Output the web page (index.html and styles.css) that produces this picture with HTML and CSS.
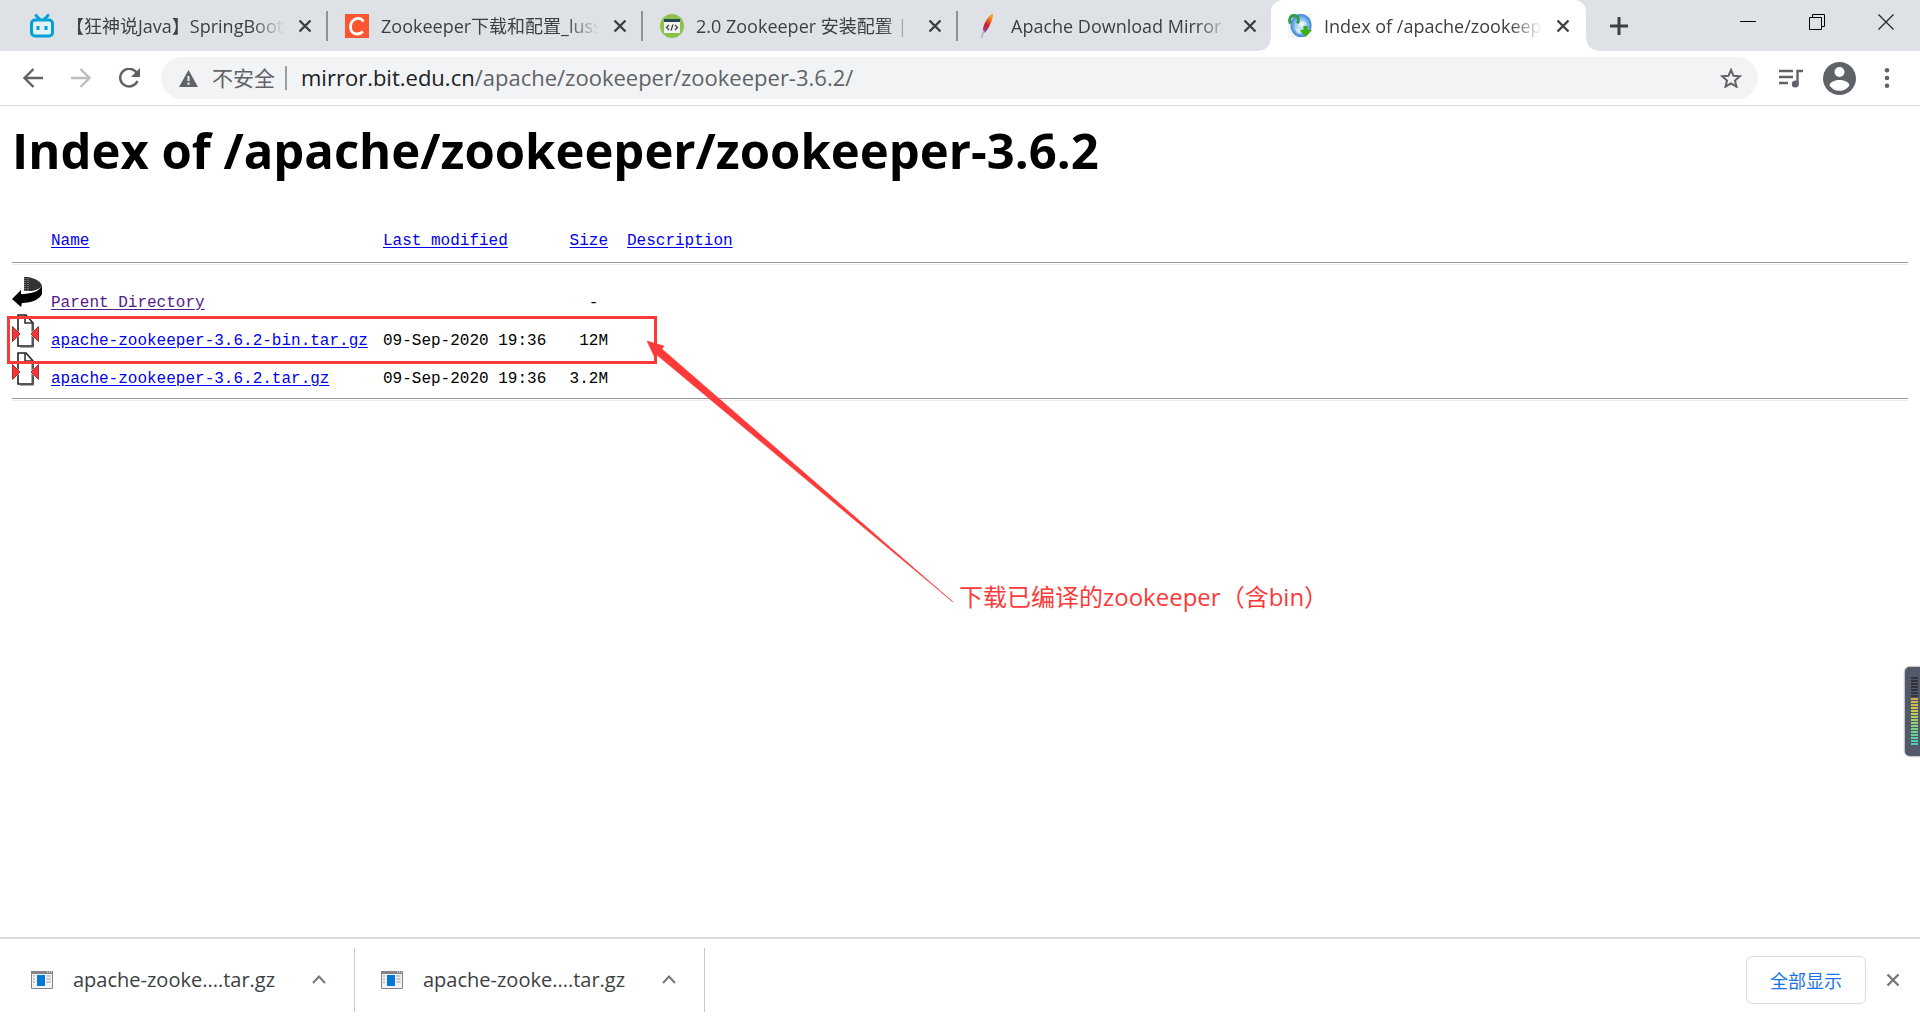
FILE: index.html
```html
<!DOCTYPE html>
<html lang="zh-CN">
<head>
<meta charset="utf-8">
<title>Index of /apache/zookeeper/zookeeper-3.6.2</title>
<link rel="stylesheet" href="styles.css">
</head>
<body>
<svg class="defs" width="0" height="0" aria-hidden="true">
  <symbol id="x" viewBox="0 0 14 14"><path d="M1.500 1.500l11 11M12.500 1.500l-11 11" fill="none" stroke="currentColor" stroke-width="2.400"/></symbol>
  <symbol id="archive" viewBox="0 0 27 34">
    <path d="M6 1h8l7 8v23H6z" fill="#fff" stroke="#222" stroke-width="1.600"/>
    <path d="M20.500 9v23.500H8" fill="none" stroke="#555" stroke-width="2"/>
    <path d="M13 1v8h8" fill="none" stroke="#333" stroke-width="1.600"/>
    <path d="M0 12l9.500 8L0 28zM27 12l-9.500 8 9.500 8z" fill="#fff"/>
    <path d="M.500 12.500L8 20 .500 27.500zM26.500 12.500L19 20l7.500 7.500z" fill="#f33" stroke="#933" stroke-width="1"/>
  </symbol>
  <symbol id="file" viewBox="0 0 22 18">
    <path d="M.5.5h21v17H.5z" fill="#f2f2f2" stroke="#82868a"/>
    <path d="M0 0h22v3H0z" fill="#82868a"/>
    <path d="M6 4h8v11H6z" fill="#0078d7"/>
    <path d="M2 5h2M2 8h2M2 11h2M15.500 5h4M15.500 8h4M15.500 11h4" stroke="#999"/>
    <path d="M16 1h1M18 1h1M20 1h1" stroke="#fff"/>
  </symbol>
</svg>

<header class="browser">
  <div class="tabs">
    <div class="tab">
      <svg class="fav" viewBox="0 0 24 24"><path d="M6 1.500l4 4M18 1.500l-4 4" stroke="#00a1d6" stroke-width="3" stroke-linecap="round"/><rect x="1.500" y="6" width="21" height="16" rx="3.500" fill="#e3f1f7" stroke="#00a1d6" stroke-width="3"/><path d="M8 12v4M16 12v4" stroke="#00a1d6" stroke-width="3"/></svg>
      <span class="title">【狂神说Java】SpringBoot</span>
      <button class="close" aria-label="关闭"><svg><use href="#x"/></svg></button>
    </div>
    <div class="tab">
      <svg class="fav" viewBox="0 0 24 24"><path fill="#fc5531" d="M0 0h24v24H0z"/><path d="M18.500 7.500C17 5 14.500 4 12 4.500 8 5.200 5.500 9 5.500 13s2.500 7 6.500 7c2.500 0 4.500-1 6-2.500" fill="none" stroke="#fff" stroke-width="2.800"/></svg>
      <span class="title">Zookeeper下载和配置_luss</span>
      <button class="close" aria-label="关闭"><svg><use href="#x"/></svg></button>
    </div>
    <div class="tab">
      <svg class="fav" viewBox="0 0 24 24"><circle cx="12" cy="12" r="12" fill="#8bc34a"/><path fill="#f1f1f1" d="M4 5h16v14H4z"/><path fill="#264653" d="M4 5h16v3H4z"/><path d="M9 11l-2.500 2.500L9 16M15 11l2.500 2.500L15 16M13 10.500l-2 6" fill="none" stroke="#444" stroke-width="1.300"/></svg>
      <span class="title">2.0 Zookeeper 安装配置 | 菜</span>
      <button class="close" aria-label="关闭"><svg><use href="#x"/></svg></button>
    </div>
    <div class="tab">
      <svg class="fav" viewBox="0 0 24 24"><defs><linearGradient id="feather" x1="0" y1="1" x2=".4" y2="0"><stop offset=".1" stop-color="#8e3a96"/><stop offset=".5" stop-color="#d22128"/><stop offset="1" stop-color="#f79a23"/></linearGradient></defs><path d="M18 0c-3 0-7 6-9 11-1 3-1.500 5-1 7l2 .5c4-4 8-13 8-18.500z" fill="url(#feather)"/><path d="M9 16l-2.500 8" stroke="#b9a5c9" stroke-width="1.400"/></svg>
      <span class="title">Apache Download Mirror</span>
      <button class="close" aria-label="关闭"><svg><use href="#x"/></svg></button>
    </div>
    <div class="tab active">
      <svg class="fav" viewBox="0 0 24 24"><defs><radialGradient id="globe"><stop offset="0" stop-color="#e8f6ff"/><stop offset=".6" stop-color="#8cc4f2"/><stop offset="1" stop-color="#3b80d4"/></radialGradient></defs><path d="M0 0h24v24H0z" fill="#f5f5f5"/><ellipse cx="13" cy="11.500" rx="10.500" ry="11.500" fill="url(#globe)"/><path d="M9 8l3 1 2-2 4 2-2 3-5-1zM7 14l5 1 1 5-4-1z" fill="#fff" opacity=".6"/><path d="M2.500 9.500c-2-4 0-8 3.500-8s5.500 3 3.500 8" fill="none" stroke="#2e9c4b" stroke-width="3"/><path d="M15.500 12h4v4H24l-6.500 7L12 16h3.500z" fill="#3cae0d"/></svg>
      <span class="title">Index of /apache/zookeep</span>
      <button class="close" aria-label="关闭"><svg><use href="#x"/></svg></button>
    </div>
    <button class="new" aria-label="新标签页"><svg width="18" height="18" viewBox="0 0 18 18"><path d="M9 0v18M0 9h18" stroke="#3c4043" stroke-width="3"/></svg></button>
    <div class="window">
      <button aria-label="最小化"><svg width="16" height="16" viewBox="0 0 16 16"><path d="M0 7.500h16" stroke="#000"/></svg></button>
      <button aria-label="还原"><svg width="16" height="16" viewBox="0 0 16 16"><path d="M.5 3.500h12v12H.5zM3.500 3.500v-3h12v12h-3" fill="none" stroke="#000"/></svg></button>
      <button aria-label="关闭窗口"><svg width="16" height="16" viewBox="0 0 16 16"><path d="M.5.5l15 15M15.500.5l-15 15" stroke="#222" stroke-width="1.200"/></svg></button>
    </div>
  </div>
  <div class="toolbar">
    <button aria-label="后退"><svg width="20" height="20" viewBox="0 0 20 20"><path d="M20 10H2M10.500 1L1.500 10l9 9" fill="none" stroke="#5f6368" stroke-width="2.400"/></svg></button>
    <button aria-label="前进"><svg width="20" height="20" viewBox="0 0 20 20"><path d="M0 10h18M9.500 1l9 9-9 9" fill="none" stroke="#bcbec0" stroke-width="2.400"/></svg></button>
    <button aria-label="重新加载"><svg width="22" height="20" viewBox="0 0 22 20"><path d="M18.500 13A9 8.800 0 1 1 17.500 4.500" fill="none" stroke="#5f6368" stroke-width="2.500"/><path d="M21 0v9h-9z" fill="#5f6368"/></svg></button>
    <div class="omnibox">
      <svg width="19" height="17" viewBox="0 0 19 17"><path d="M9.500 0L19 17H0z" fill="#5f6368"/><path d="M9.500 6v5M9.500 12.500v2.200" stroke="#f1f3f4" stroke-width="2"/></svg>
      <span class="warn">不安全</span>
      <div class="url"><b>mirror.bit.edu.cn</b>/apache/zookeeper/zookeeper-3.6.2/</div>
      <button aria-label="收藏"><svg width="22" height="20" viewBox="0 0 22 20"><path d="M11 2l2.500 5.800 6.300.5-4.800 4.200 1.500 6.200-5.500-3.300-5.500 3.300L7 12.500 2.200 8.300l6.300-.5z" fill="none" stroke="#5f6368" stroke-width="2"/></svg></button>
    </div>
    <button aria-label="媒体控制"><svg width="24" height="19" viewBox="0 0 24 19"><path d="M0 2h14M0 8h14M0 14h9" stroke="#5f6368" stroke-width="2.400"/><path d="M18.500 15V2H24" fill="none" stroke="#5f6368" stroke-width="2.400"/><circle cx="16.300" cy="15" r="3.500" fill="#5f6368"/></svg></button>
    <button class="profile" aria-label="个人资料"><svg width="33" height="33" viewBox="0 0 33 33"><circle cx="16.500" cy="16.500" r="16.500" fill="#5f6368"/><circle cx="16.500" cy="10" r="5" fill="#fff"/><path d="M6.500 23c1-3.500 6-5 10-5s9 1.500 10 5c-2 4-6 5.800-10 5.800S8.500 27 6.500 23z" fill="#fff"/></svg></button>
    <button aria-label="菜单"><svg width="6" height="20" viewBox="0 0 6 20"><g fill="#5f6368"><circle cx="3" cy="2.300" r="2.300"/><circle cx="3" cy="10" r="2.300"/><circle cx="3" cy="17.700" r="2.300"/></g></svg></button>
  </div>
</header>

<main class="page">
  <h1>Index of /apache/zookeeper/zookeeper-3.6.2</h1>
  <table class="listing">
    <colgroup><col class="c-icon"><col class="c-name"><col class="c-date"><col class="c-size"><col></colgroup>
    <thead>
      <tr><th></th><th><a href="#name">Name</a></th><th><a href="#date">Last modified</a></th><th class="size"><a href="#size">Size</a></th><th class="desc"><a href="#desc">Description</a></th></tr>
    </thead>
    <tbody>
      <tr>
        <td class="icon"><svg width="30" height="30" viewBox="0 0 30 30"><path d="M12 0h4c6 1 13 4 14 9-2 3-6 4-10 5h-8z" fill="#333"/><path d="M13 1v13M16 1v13" stroke="#aaa" stroke-dasharray="1 1"/><path d="M30 9v8c-2 5-10 9-20 9l-1 4L0 22l9-9v4c9 0 18-2 21-8z" fill="#000"/></svg></td>
        <td><a class="visited" href="#parent">Parent Directory</a></td><td></td><td class="size">-&nbsp;</td><td></td>
      </tr>
      <tr>
        <td class="icon"><svg width="27" height="34"><use href="#archive"/></svg></td>
        <td><a href="#bin">apache-zookeeper-3.6.2-bin.tar.gz</a></td><td>09-Sep-2020 19:36</td><td class="size">12M</td><td></td>
      </tr>
      <tr>
        <td class="icon"><svg width="27" height="34"><use href="#archive"/></svg></td>
        <td><a href="#src">apache-zookeeper-3.6.2.tar.gz</a></td><td>09-Sep-2020 19:36</td><td class="size">3.2M</td><td></td>
      </tr>
    </tbody>
  </table>

  <div class="mark"></div>
  <svg class="arrow" width="306" height="261" viewBox="0 0 306 261"><path d="M0 0l17 5-2 3L306 261 10 14l-3 1z" fill="#fd3a3a" stroke="#fd3a3a" stroke-width=".6"/></svg>
  <p class="note">下载已编译的zookeeper（含bin）</p>
  <div class="meter"><i></i></div>
</main>

<footer class="shelf">
  <div class="item"><svg width="22" height="18"><use href="#file"/></svg><a href="#file1">apache-zooke....tar.gz</a><button aria-label="更多"><svg width="14" height="9" viewBox="0 0 14 9"><path d="M1 8l6-6.500L13 8" fill="none" stroke="#75787c" stroke-width="2"/></svg></button></div>
  <div class="item"><svg width="22" height="18"><use href="#file"/></svg><a href="#file2">apache-zooke....tar.gz</a><button aria-label="更多"><svg width="14" height="9" viewBox="0 0 14 9"><path d="M1 8l6-6.500L13 8" fill="none" stroke="#75787c" stroke-width="2"/></svg></button></div>
  <button class="all">全部显示</button>
  <button class="dismiss" aria-label="关闭下载栏"><svg width="14" height="14"><use href="#x"/></svg></button>
</footer>
</body>
</html>
```
FILE: styles.css
```css
* { box-sizing: border-box; }

body {
  margin: 0;
  min-height: 100vh;
  display: flex;
  flex-direction: column;
  background: #fff;
  font-family: "Open Sans", "Noto Sans CJK SC", sans-serif;
}

svg { display: block; flex: none; }
.defs { position: absolute; }

button {
  display: flex;
  align-items: center;
  justify-content: center;
  margin: 0;
  padding: 0;
  border: 0;
  background: none;
  font: inherit;
  color: inherit;
}

/* Tab strip */
.tabs {
  display: flex;
  height: 51px;
  padding-left: 13px;
  background: #dee1e6;
  color: #3c4043;
}

.tab {
  position: relative;
  display: flex;
  align-items: center;
  flex: 0 1 315px;
  min-width: 0;
  padding: 0 16px 0 17px;
  font-size: 18px;
}

.tab::after {
  content: "";
  position: absolute;
  right: 0;
  top: 11px;
  width: 2px;
  height: 30px;
  background: #8f9296;
}

.tab:nth-child(4)::after { display: none; }

.tab.active {
  margin-left: -2px;
  border-radius: 12px 12px 0 0;
  background: #fff;
}

/* Curved feet of the selected tab */
.tab.active::before,
.tab.active::after {
  content: "";
  position: absolute;
  top: auto;
  bottom: 0;
  width: 12px;
  height: 12px;
}

.tab.active::before {
  left: -12px;
  background: radial-gradient(circle at 0 0, transparent 11px, #fff 12px);
}

.tab.active::after {
  right: -12px;
  background: radial-gradient(circle at 100% 0, transparent 11px, #fff 12px);
}

.fav { width: 24px; height: 24px; }

.title {
  flex: 1;
  min-width: 0;
  margin: 0 14px 0 12px;
  overflow: hidden;
  white-space: nowrap;
  line-height: 30px;
  -webkit-mask-image: linear-gradient(to left, transparent, #000 32px);
  mask-image: linear-gradient(to left, transparent, #000 32px);
}

.close svg { width: 14px; height: 14px; }

.new { width: 66px; }

.window { display: flex; margin-left: auto; padding-bottom: 8px; }
.window button { width: 69px; }

/* Toolbar */
.toolbar {
  display: flex;
  align-items: center;
  height: 55px;
  padding: 0 30px 0 23px;
  gap: 28px;
  border-bottom: 1px solid #d5d6d9;
}

.omnibox {
  display: flex;
  align-items: center;
  flex: 1;
  height: 42px;
  margin: 0 -7px 0 -8px;
  padding: 0 16px 0 18px;
  border-radius: 21px;
  background: #f1f3f4;
  color: #5f6368;
  font-size: 21px;
}

.profile { margin-left: -8px; }

.warn {
  margin-left: 14px;
  padding-right: 10px;
  border-right: 2px solid #9a9da1;
  line-height: 24px;
}

.url { flex: 1; margin-left: 14px; padding-bottom: 2px; font-size: 22px; line-height: 30px; }
.url b { font-weight: 400; color: #202124; }

/* Directory listing */
.page {
  position: relative;
  flex: 1;
  padding: 9px 12px;
}

h1 {
  margin: 0 0 45px;
  font-size: 49px;
  line-height: 70px;
  font-weight: 700;
  color: #000;
}

.listing {
  width: 100%;
  table-layout: fixed;
  border-spacing: 0;
  border-bottom: 1px solid #9a9a9a;
  box-shadow: 0 1px #fff, 0 2px #eee;
  padding-bottom: 8px;
  font: 16px/22px "Liberation Mono", monospace;
  color: #000;
}

.c-icon { width: 39px; }
.c-name { width: 332px; }
.c-date { width: 185px; }
.c-size { width: 40px; }

.listing th, .listing td {
  padding: 0;
  text-align: left;
  vertical-align: bottom;
  font-weight: 400;
  white-space: nowrap;
}

.listing th {
  padding-bottom: 10px;
  border-bottom: 1px solid #9a9a9a;
  box-shadow: 0 1px #fff, 0 2px #eee;
}

.listing td { height: 38px; }
.listing tbody tr:first-child td { height: 51px; }
.listing .icon { padding-bottom: 4px; }
.listing tbody tr:first-child .icon { padding-bottom: 7px; }
.listing .size { text-align: right; }
.listing .desc { padding-left: 19px; }
.listing a { color: #00e; text-underline-offset: 2px; }
.listing .visited { color: #551a8b; }

/* Annotations over the page */
.mark {
  position: absolute;
  left: 7px;
  top: 210px;
  width: 650px;
  height: 48px;
  border: 3px solid #fd3a3a;
}

.arrow { position: absolute; left: 647px; top: 235px; }

.note {
  position: absolute;
  left: 959px;
  top: 473px;
  margin: 0;
  font-size: 24px;
  line-height: 36px;
  color: #fd3a3a;
}

.meter {
  position: absolute;
  right: 0;
  top: 561px;
  width: 15px;
  height: 89px;
  padding: 10px 2px 10px 6px;
  border-radius: 5px 0 0 5px;
  background: #535969;
  box-shadow: 0 0 2px #333;
}

.meter i {
  display: block;
  height: 100%;
  background:
    repeating-linear-gradient(transparent 0 2px, #535969 2px 3px),
    linear-gradient(#30343f 0 30%, #d5ab45 31%, #c8cc51 50%, #7bd383 75%, #43cbc4);
}

/* Download shelf */
.shelf {
  display: flex;
  align-items: center;
  height: 83px;
  padding: 0 20px 0 5px;
  border-top: 2px solid #d9dadf;
}

.item {
  display: flex;
  align-items: center;
  width: 350px;
  height: 64px;
  padding: 0 28px 0 26px;
  border-right: 1px solid #c9cacd;
  font-size: 20px;
}

.item a {
  flex: 1;
  margin-left: 20px;
  color: #3c4043;
  text-decoration: none;
}

.all {
  width: 120px;
  height: 48px;
  margin-left: auto;
  border: 1px solid #dadce0;
  border-radius: 6px;
  color: #1a73e8;
  font-size: 18px;
}

.dismiss { margin-left: 20px; color: #75787c; }
```
